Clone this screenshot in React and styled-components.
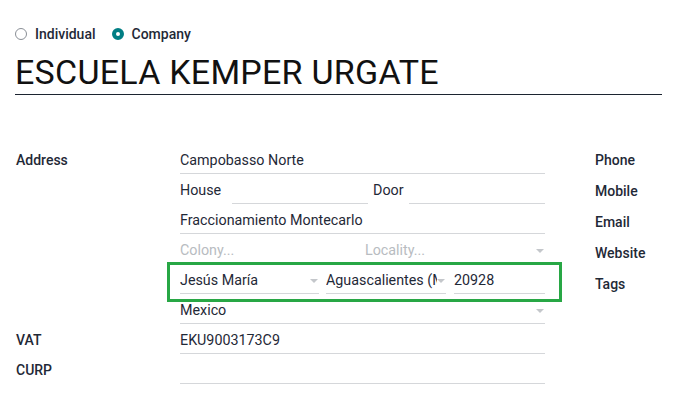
import styled, { createGlobalStyle } from "styled-components";

const GlobalStyle = createGlobalStyle`
  body {
    margin: 0;
    background: #fff;
    font-family: Roboto, "Noto Sans", sans-serif;
    color: #212529;
  }
`

const Sheet = styled.div`
  padding: 24px 14px 0 15px;
`

const RadioRow = styled.div`
  display: flex;
  align-items: center;
  gap: 16px;
  height: 20px;
`

const RadioOption = styled.label`
  display: flex;
  align-items: center;
  gap: 8px;
  font-size: 14px;
  font-weight: 500;
  color: #1f2937;
`

const RadioDot = styled.span`
  width: 12px;
  height: 12px;
  border-radius: 50%;
  box-sizing: border-box;
  border: ${(p) => (p.checked ? "4px solid #017e84" : "1px solid #8a8f96")};
  background: #fff;
`

const Title = styled.h1`
  margin: 8px 0 0;
  padding-bottom: 2px;
  font-size: 34px;
  letter-spacing: 0.25px;
  line-height: 40px;
  font-weight: 400;
  color: #111;
  border-bottom: 1px solid #1c2430;
`

const Main = styled.div`
  display: flex;
  margin-top: 49px;
`

const LeftGroup = styled.div`
  display: grid;
  grid-template-columns: 165px 365px;
`

const Label = styled.div`
  box-sizing: border-box;
  height: 30px;
  padding-top: 1px;
  line-height: 30px;
  font-size: 14px;
  font-weight: 500;
  color: #1f2937;
  padding-left: 1px;
`

const AddressBlock = styled.div`
  display: flex;
  flex-direction: column;
`

const Row = styled.div`
  position: relative;
  display: flex;
  align-items: flex-end;
  height: 30px;

  ${(p) =>
    p.highlight &&
    `
    &::after {
      content: "";
      position: absolute;
      top: -2px;
      left: -13px;
      right: -17px;
      bottom: -8px;
      border: 3px solid #28a745;
      pointer-events: none;
    }
  `}
`

const Field = styled.div`
  position: relative;
  display: flex;
  box-sizing: border-box;
  height: 30px;
  padding-top: 4px;
  line-height: 25px;
  font-size: 14.3px;
  color: ${(p) => (p.placeholder ? "#b8bcc1" : "#1f2937")};
  border-bottom: 1px solid #d5d7da;
  white-space: nowrap;
  width: ${(p) => (p.w ? `${p.w}px` : "auto")};
  flex: ${(p) => (p.w ? "none" : "1")};
  margin-left: ${(p) => (p.gap ? `${p.gap}px` : "0")};
  padding-right: ${(p) => (p.select ? "9px" : "0")};
`

const Value = styled.span`
  flex: 1;
  min-width: 0;
  overflow: hidden;
`

const InlineLabel = styled.span`
  box-sizing: border-box;
  height: 30px;
  padding-top: 4px;
  line-height: 25px;
  font-size: 14.3px;
  color: #1f2937;
  width: ${(p) => p.w}px;
  margin-left: ${(p) => (p.gap ? `${p.gap}px` : "0")};
`

const Caret = styled.span`
  position: absolute;
  right: 1px;
  top: 15px;
  width: 0;
  height: 0;
  border-left: 4px solid transparent;
  border-right: 4px solid transparent;
  border-top: 4px solid #c4c7cb;
`

const RightGroup = styled.div`
  margin-left: 49px;
  display: flex;
  flex-direction: column;
`

const SideLabel = styled(Label)`
  height: 31px;
`

function Input({ children, ...rest }) {
  return (
    <Field {...rest}>
      <Value>{children}</Value>
    </Field>
  )
}

function Select({ children, ...rest }) {
  return (
    <Field select {...rest}>
      <Value>{children}</Value>
      <Caret />
    </Field>
  )
}

export default function App() {
  return (
    <>
      <GlobalStyle />
      <Sheet>
        <RadioRow>
          <RadioOption>
            <RadioDot />
            Individual
          </RadioOption>
          <RadioOption>
            <RadioDot checked />
            Company
          </RadioOption>
        </RadioRow>
        <Title>ESCUELA KEMPER URGATE</Title>

        <Main>
          <LeftGroup>
            <Label>Address</Label>
            <AddressBlock>
              <Row>
                <Input>Campobasso Norte</Input>
              </Row>
              <Row>
                <InlineLabel w={52}>House</InlineLabel>
                <Input w={136} />
                <InlineLabel w={36} gap={5}>Door</InlineLabel>
                <Input w={136} />
              </Row>
              <Row>
                <Input>Fraccionamiento Montecarlo</Input>
              </Row>
              <Row>
                <Input w={179} placeholder>Colony...</Input>
                <Select w={180} gap={6} placeholder>Locality...</Select>
              </Row>
              <Row highlight>
                <Select w={139}>Jesús María</Select>
                <Select w={120} gap={7}>Aguascalientes (MX)</Select>
                <Input w={91} gap={8}>20928</Input>
              </Row>
              <Row>
                <Select>Mexico</Select>
              </Row>
            </AddressBlock>

            <Label>VAT</Label>
            <Row>
              <Input>EKU9003173C9</Input>
            </Row>

            <Label>CURP</Label>
            <Row>
              <Input />
            </Row>
          </LeftGroup>

          <RightGroup>
            <SideLabel>Phone</SideLabel>
            <SideLabel>Mobile</SideLabel>
            <SideLabel>Email</SideLabel>
            <SideLabel>Website</SideLabel>
            <SideLabel>Tags</SideLabel>
          </RightGroup>
        </Main>
      </Sheet>
    </>
  )
}
